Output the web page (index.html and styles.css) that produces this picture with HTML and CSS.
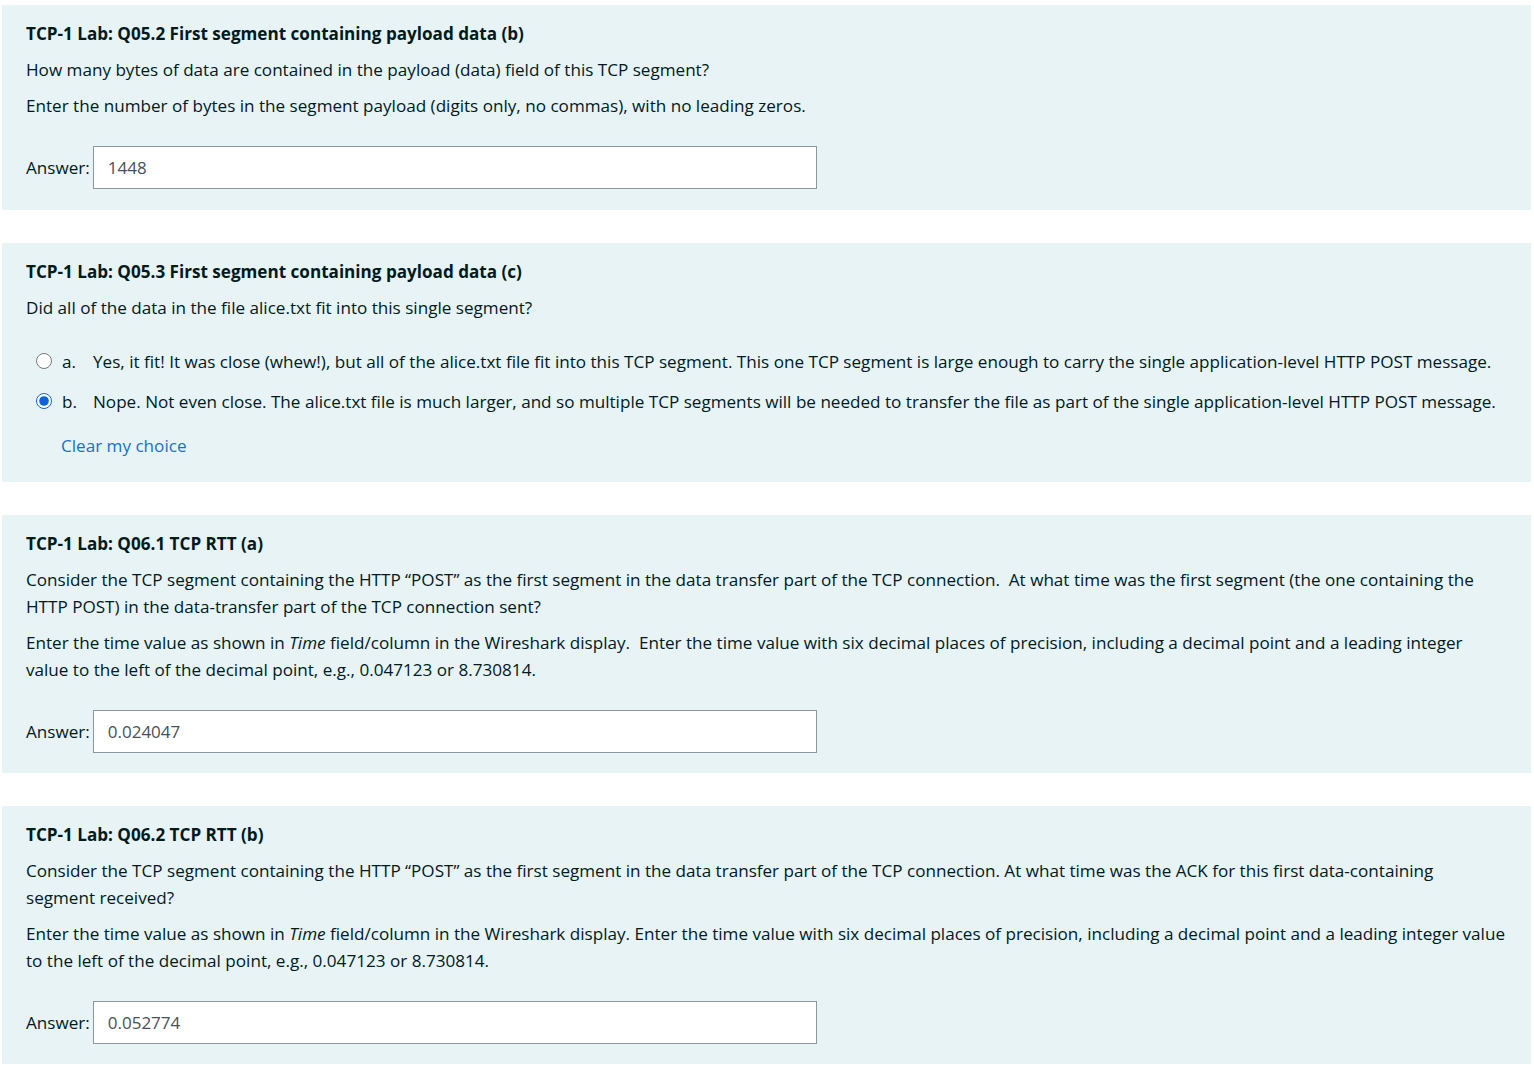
FILE: index.html
```html
<!DOCTYPE html>
<html lang="en">
<head>
<meta charset="utf-8">
<title>TCP-1 Lab</title>
<link rel="stylesheet" href="styles.css">
</head>
<body>
<div class="page">
  <div class="que que-first">
    <h4 class="qname">TCP-1 Lab: Q05.2 First segment containing payload data (b)</h4>
    <p>How many bytes of data are contained in the payload (data) field of this TCP segment?</p>
    <p>Enter the number of bytes in the segment payload (digits only, no commas), with no leading zeros.</p>
    <div class="ablock">
      <label class="alabel">Answer:</label>
      <input class="ainput" type="text" value="1448">
    </div>
  </div>

  <div class="que que-mc">
    <h4 class="qname">TCP-1 Lab: Q05.3 First segment containing payload data (c)</h4>
    <p>Did all of the data in the file alice.txt fit into this single segment?</p>
    <div class="choices">
      <div class="opt">
        <input class="radio" type="radio" name="q53">
        <span class="letter">a.</span>
        <span class="otext">Yes, it fit! It was close (whew!), but all of the alice.txt file fit into this TCP segment. This one TCP segment is large enough to carry the single application-level HTTP POST message.</span>
      </div>
      <div class="opt">
        <input class="radio" type="radio" name="q53" checked>
        <span class="letter">b.</span>
        <span class="otext">Nope. Not even close. The alice.txt file is much larger, and so multiple TCP segments will be needed to transfer the file as part of the single application-level HTTP POST message.</span>
      </div>
    </div>
    <div class="clear"><a href="#">Clear my choice</a></div>
  </div>

  <div class="que">
    <h4 class="qname">TCP-1 Lab: Q06.1 TCP RTT (a)</h4>
    <p>Consider the TCP segment containing the HTTP “POST” as the first segment in the data transfer part of the TCP connection.&nbsp; At what time was the first segment (the one containing the HTTP POST) in the data-transfer part of the TCP connection sent?</p>
    <p>Enter the time value as shown in <em>Time</em> field/column in the Wireshark display.&nbsp; Enter the time value with six decimal places of precision, including a decimal point and a leading integer value to the left of the decimal point, e.g., 0.047123 or 8.730814.</p>
    <div class="ablock">
      <label class="alabel">Answer:</label>
      <input class="ainput" type="text" value="0.024047">
    </div>
  </div>

  <div class="que">
    <h4 class="qname">TCP-1 Lab: Q06.2 TCP RTT (b)</h4>
    <p>Consider the TCP segment containing the HTTP “POST” as the first segment in the data transfer part of the TCP connection. At what time was the ACK for this first data-containing segment received?</p>
    <p>Enter the time value as shown in <em>Time</em> field/column in the Wireshark display. Enter the time value with six decimal places of precision, including a decimal point and a leading integer value to the left of the decimal point, e.g., 0.047123 or 8.730814.</p>
    <div class="ablock">
      <label class="alabel">Answer:</label>
      <input class="ainput" type="text" value="0.052774">
    </div>
  </div>
</div>
</body>
</html>
```

FILE: styles.css
```css
html, body {
  margin: 0;
  padding: 0;
  background: #ffffff;
}

body {
  font-family: "Open Sans", "Noto Sans", sans-serif;
  font-size: 17.1px;
  line-height: 27px;
  color: #001a1e;
}

.page {
  display: flex;
  flex-direction: column;
  gap: 33px;
  padding: 5px 3px 0 2px;
}

.que {
  background: #e7f3f5;
  padding: 15px 26px 20px 24px;
}

.que-first {
  padding-bottom: 21px;
}

.que-mc {
  padding-bottom: 23px;
}

.qname {
  margin: 0 0 9px 0;
  font-size: 17.1px;
  font-weight: 700;
  line-height: 27px;
}

.que p {
  margin: 0 0 9px 0;
}

.ablock {
  display: flex;
  align-items: center;
  gap: 3px;
  margin-top: 27px;
}

.alabel {
  line-height: 27px;
}

.ainput {
  box-sizing: border-box;
  width: 724px;
  height: 43px;
  margin: 0;
  padding: 0 14px;
  border: 1px solid #8f959e;
  border-radius: 0;
  background: #ffffff;
  font-family: inherit;
  font-size: 17px;
  color: #495057;
  outline: none;
}

.choices {
  margin-top: 20px;
  display: flex;
  flex-direction: column;
}

.opt {
  display: flex;
  align-items: center;
  height: 40px;
  padding-left: 10px;
}

.radio {
  width: 16px;
  height: 16px;
  margin: 0 10px 0 0;
  accent-color: #0f62d9;
}

.letter {
  width: 31px;
  flex: none;
}

.otext {
  white-space: nowrap;
}

.clear {
  margin-top: 11px;
  padding-left: 35px;
}

.clear a {
  color: #1870c9;
  text-decoration: none;
}
```
